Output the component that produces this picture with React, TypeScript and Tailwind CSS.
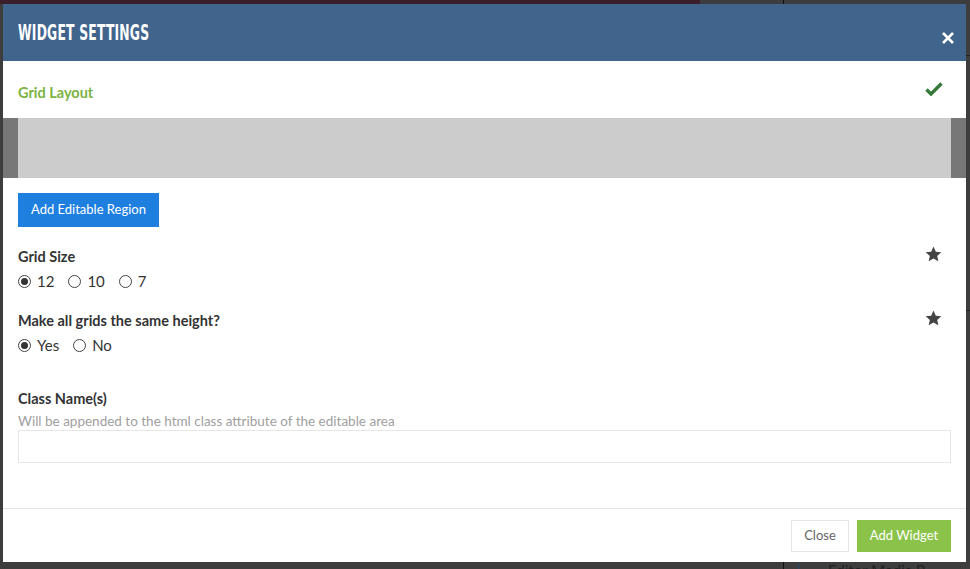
import React from "react";

function Radio({ checked, label }: { checked?: boolean; label: string }) {
  return (
    <label className="flex items-center gap-[6px]">
      <span className="flex h-[13px] w-[13px] items-center justify-center rounded-full border border-[#444] bg-white">
        {checked && <span className="h-[7px] w-[7px] rounded-full bg-[#333]" />}
      </span>
      <span>{label}</span>
    </label>
  );
}

function Star() {
  return (
    <svg width="17" height="16" viewBox="0 0 24 23" className="-mt-[1px] mr-[9px]">
      <path
        d="M12 0.8l3.3 7.3 7.9.8-5.9 5.3 1.7 7.8L12 18l-7 4 1.7-7.8L0.8 8.9l7.9-.8z"
        fill="#444"
      />
    </svg>
  );
}

export default function App() {
  return (
    <div
      className="relative h-[569px] w-[970px] overflow-hidden bg-[#3d3d3d]"
      style={{ fontFamily: "Lato, 'Open Sans', sans-serif" }}
    >
      {/* background hints */}
      <div className="absolute left-0 top-0 h-[4px] w-[700px] bg-[#3a1f2a]" />
      <div className="absolute left-[783px] top-0 h-[4px] w-px bg-[#111]" />
      <div className="absolute left-[783px] top-[562px] h-[7px] w-px bg-[#111]" />
      <div className="absolute left-[798px] top-[562px] h-[7px] w-px bg-[#2a4a6a]" />
      <div className="absolute left-[828px] top-[560px] text-[15px] leading-[20px] text-[#222]">Editor Media P</div>
      <div className="absolute left-[966px] top-[55px] h-px w-[4px] bg-[#222]" />
      <div className="absolute left-[966px] top-[310px] h-px w-[4px] bg-[#222]" />

      {/* modal */}
      <div className="absolute left-[3px] top-[4px] flex h-[558px] w-[963px] flex-col bg-white">
        {/* header */}
        <div className="flex h-[57px] items-center justify-between bg-[#41648c] pl-[15px] pr-[11px]">
          <div
            className="mt-[1px] inline-block origin-left scale-x-[0.67] text-[20.5px] font-bold leading-[24px] tracking-[0.3px] text-white"
            style={{ fontFamily: "'DejaVu Sans Condensed', 'DejaVu Sans', sans-serif" }}
          >
            WIDGET SETTINGS
          </div>
          <svg width="14" height="12" viewBox="0 0 14 12" className="mt-[10px]">
            <path d="M2 1L12 11M12 1L2 11" stroke="white" strokeWidth="2.6" />
          </svg>
        </div>

        {/* grid layout row */}
        <div className="flex h-[57px] items-center justify-between px-[15px] pt-[6px]">
          <div className="text-[14.5px] font-bold leading-[20px] text-[#7cb342]">Grid Layout</div>
          <svg width="18" height="14" viewBox="0 0 18 14" className="mb-[8px] mr-[8px]">
            <path d="M1.5 7.5L6 12L16.5 1.5" stroke="#357a38" strokeWidth="3.4" fill="none" />
          </svg>
        </div>

        {/* gray band */}
        <div className="h-[60px] bg-[#777] px-[15px]">
          <div className="h-full bg-[#cccccc]" />
        </div>

        {/* body */}
        <div className="flex flex-1 flex-col px-[15px] text-[#333]">
          <div className="mt-[15px]">
            <button className="h-[34px] w-[141px] bg-[#1e7fdf] text-[13px] text-white">Add Editable Region</button>
          </div>

          <div className="mt-[20px] flex items-start justify-between">
            <div className="text-[14.5px] font-bold leading-[20px] text-[#333]">Grid Size</div>
            <Star />
          </div>
          <div className="mt-[3px] flex gap-[14px] text-[15px] leading-[22px]">
            <Radio checked label="12" />
            <Radio label="10" />
            <Radio label="7" />
          </div>

          <div className="mt-[19px] flex items-start justify-between">
            <div className="text-[14.5px] font-bold leading-[20px] text-[#333]">Make all grids the same height?</div>
            <Star />
          </div>
          <div className="mt-[3px] flex gap-[14px] text-[15px] leading-[22px]">
            <Radio checked label="Yes" />
            <Radio label="No" />
          </div>

          <div className="mt-[33px] text-[14.5px] font-bold leading-[20px] text-[#333]">Class Name(s)</div>
          <div className="mt-[3px] text-[13.5px] leading-[18px] text-[#a0a0a0]">
            Will be appended to the html class attribute of the editable area
          </div>
          <div className="h-[33px] border border-[#e6e6e6] bg-white" />
        </div>

        {/* footer */}
        <div className="flex h-[54px] items-center justify-end gap-[8px] border-t border-[#e5e5e5] px-[15px]">
          <button className="h-[32px] w-[58px] border border-[#e6e6e6] bg-white text-[13px] text-[#666]">Close</button>
          <button className="h-[32px] w-[94px] bg-[#8bc34a] text-[13px] text-white">Add Widget</button>
        </div>
      </div>
    </div>
  );
}
